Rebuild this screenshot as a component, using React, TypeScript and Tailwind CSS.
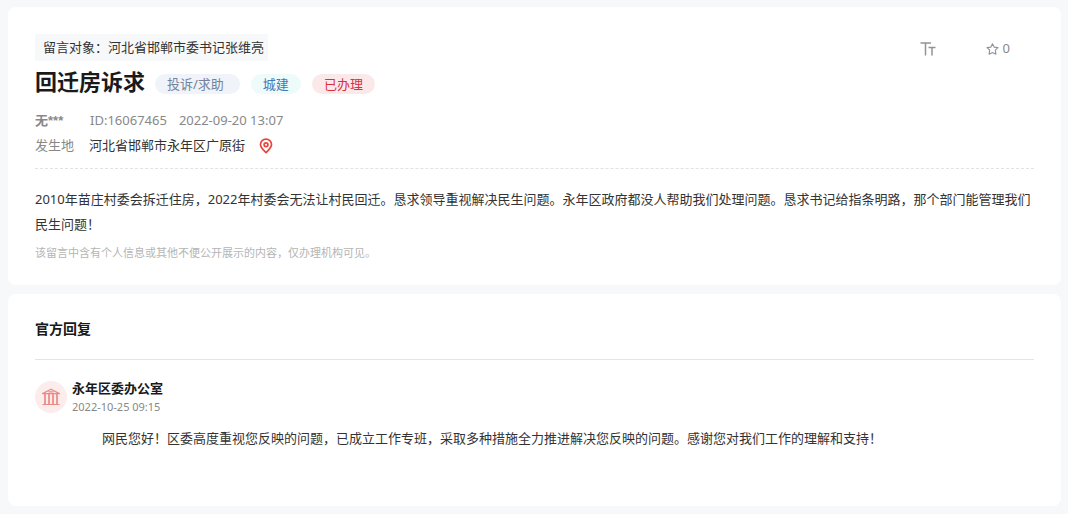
import React from "react";

function TextSizeIcon() {
  return (
    <svg width="16" height="14" viewBox="0 0 16 14" fill="none" stroke="#8e949c" strokeWidth="1.5" aria-hidden="true">
      <path d="M0.5 1H11M5.5 1V13.5M8.5 5.5H15.5M12 5.5V13.5" />
    </svg>
  );
}

function StarIcon() {
  return (
    <svg width="13" height="12" viewBox="0 0 13 12" fill="none" stroke="#8e949c" strokeWidth="1.1" strokeLinejoin="round" aria-hidden="true">
      <path d="M6.5 0.8L8.1 4.1L12 4.6L9.3 7.2L9.9 11.2L6.5 9.5L3.1 11.2L3.7 7.2L1 4.6L4.9 4.1Z" />
    </svg>
  );
}

function PinIcon() {
  return (
    <svg width="14" height="16" viewBox="0 0 14 16" fill="none" stroke="#e8453c" strokeWidth="1.7" strokeLinejoin="round" aria-hidden="true">
      <path d="M7 14.6C4.8 12.4 1.5 9.8 1.5 6.6a5.5 5.5 0 0 1 11 0C12.5 9.8 9.2 12.4 7 14.6Z" />
      <circle cx="7" cy="6.7" r="1.9" />
    </svg>
  );
}

function InstitutionIcon() {
  return (
    <svg width="20" height="18" viewBox="0 0 20 18" fill="none" stroke="#e98b86" strokeWidth="1.2" strokeLinejoin="round" aria-hidden="true">
      <path d="M1.5 5.6L10 1.2L18.5 5.6ZM7.5 3.9H12.5M1.5 16.5H18.5" />
      <path strokeWidth="1.7" d="M4 5.6V16.5M8 5.6V16.5M12 5.6V16.5M16 5.6V16.5" />
    </svg>
  );
}

export default function App() {
  return (
    <main className="flex min-h-screen flex-col gap-[9px] bg-[#f7f8fa] pt-[7px] pr-[7px] pb-2 pl-2 font-['Noto_Sans','Noto_Sans_CJK_SC',sans-serif] text-[13px] leading-[25px] text-[#333]">
      <article className="rounded-lg bg-white px-[27px] pt-[27px] pb-5">
        <header className="border-b border-dashed border-[#e2e2e2] pb-[10px]">
          <div className="flex items-center justify-between">
            <p className="bg-[#f7f8fa] py-px pr-1 pl-2">留言对象：河北省邯郸市委书记张维亮</p>
            <div className="flex items-center gap-[50px] pt-0.5 pr-6 text-[#888]">
              <button type="button" aria-label="字号">
                <TextSizeIcon />
              </button>
              <button type="button" className="flex items-center gap-1" aria-label="收藏 0">
                <StarIcon />
                <span>0</span>
              </button>
            </div>
          </div>
          <div className="flex items-center gap-[10px] pt-0.5">
            <h1 className="text-[22px] leading-9 font-bold text-[#1a1a1a]">回迁房诉求</h1>
            <ul className="flex gap-[11px] pt-1.5 leading-5">
              <li className="rounded-full bg-[#f0f3f9] pr-4 pl-3 text-[#73839c]">投诉/求助</li>
              <li className="rounded-full bg-[#edfcfa] px-3 text-[#4777b8]">城建</li>
              <li className="rounded-full bg-[#fbe9ea] px-3 text-[#d9303e]">已办理</li>
            </ul>
          </div>
          <div className="flex pt-[9px] text-[#888]">
            <span className="w-[55px] font-bold">
              无<span className="font-['Liberation_Sans',sans-serif]">***</span>
            </span>
            <span className="mr-3">ID:16067465</span>
            <time dateTime="2022-09-20T13:07">2022-09-20 13:07</time>
          </div>
          <div className="flex items-center">
            <span className="w-[54px] text-[#888]">发生地</span>
            <span className="mr-[14px]">河北省邯郸市永年区广原街</span>
            <PinIcon />
          </div>
        </header>
        <p className="pt-[18px]">
          2010年苗庄村委会拆迁住房，2022年村委会无法让村民回迁。恳求领导重视解决民生问题。永年区政府都没人帮助我们处理问题。恳求书记给指条明路，那个部门能管理我们民生问题！
        </p>
        <p className="pt-[3px] text-[11px] text-[#b5b5b5]">该留言中含有个人信息或其他不便公开展示的内容，仅办理机构可见。</p>
      </article>

      <section className="grow rounded-lg bg-white px-[27px] pt-[22px] pb-[54px]">
        <h2 className="border-b border-[#e4e4e4] pb-[18px] text-sm leading-[25px] font-bold text-[#1a1a1a]">官方回复</h2>
        <div className="flex items-center gap-[5px] pt-[18px]">
          <span className="flex size-8 items-center justify-center rounded-full bg-[#fdecec]">
            <InstitutionIcon />
          </span>
          <div>
            <h3 className="leading-5 font-bold text-[#1a1a1a]">永年区委办公室</h3>
            <time dateTime="2022-10-25T09:15" className="block text-[11px] leading-[18px] text-[#888]">
              2022-10-25 09:15
            </time>
          </div>
        </div>
        <p className="pt-[10px] pl-[67px]">
          网民您好！区委高度重视您反映的问题，已成立工作专班，采取多种措施全力推进解决您反映的问题。感谢您对我们工作的理解和支持！
        </p>
      </section>
    </main>
  );
}
